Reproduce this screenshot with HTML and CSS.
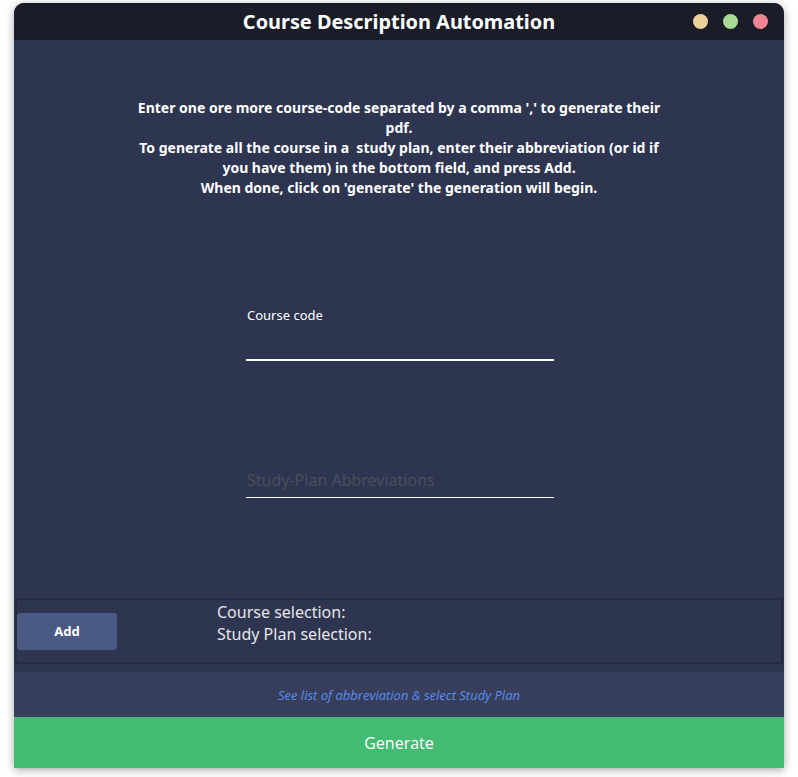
FILE: index.html
```html
<!DOCTYPE html>
<html>
<head>
<meta charset="utf-8">
<link rel="stylesheet" href="styles.css">
</head>
<body>
<div class="window">
  <div class="titlebar">
    <div class="title">Course Description Automation</div>
    <div class="dots">
      <span class="dot yellow"></span>
      <span class="dot green"></span>
      <span class="dot red"></span>
    </div>
  </div>
  <div class="main">
    <p class="intro">Enter one ore more course-code separated by a comma ',' to generate their pdf.<br>To generate all the course in a&nbsp; study plan, enter their abbreviation (or id if you have them) in the bottom field, and press Add.<br>When done, click on 'generate' the generation will begin.</p>
    <div class="field field-code">
      <label class="field-label">Course code</label>
      <div class="field-input"></div>
    </div>
    <div class="field field-plan">
      <div class="placeholder">Study-Plan Abbreviations</div>
    </div>
  </div>
  <div class="panel">
    <button class="add-btn">Add</button>
    <div class="selections">
      <div>Course selection:</div>
      <div>Study Plan selection:</div>
    </div>
  </div>
  <div class="linkbar"><span class="link">See list of abbreviation &amp; select Study Plan</span></div>
  <div class="generate">Generate</div>
</div>
</body>
</html>
```

FILE: styles.css
```css
* { box-sizing: border-box; }
html, body { margin: 0; padding: 0; }
body {
  background: #ffffff;
  width: 798px;
  height: 777px;
  overflow: hidden;
  font-family: "Noto Sans", "Open Sans", sans-serif;
}
.window {
  margin: 3px 0 0 14px;
  width: 770px;
  height: 765px;
  background: #2e3550;
  border-radius: 10px 10px 0 0;
  display: flex;
  flex-direction: column;
  box-shadow: 0 2px 10px rgba(0,0,0,0.35);
}
.titlebar {
  height: 37px;
  background: #1a1c28;
  border-radius: 10px 10px 0 0;
  display: flex;
  align-items: center;
  justify-content: center;
  position: relative;
}
.title {
  color: #ffffff;
  font-weight: 700;
  font-size: 19.9px;
}
.dots {
  position: absolute;
  right: 16px;
  top: 11px;
  display: flex;
  gap: 15px;
}
.dot {
  width: 15px;
  height: 15px;
  border-radius: 50%;
  display: block;
}
.yellow { background: #edd29c; }
.green { background: #a6da95; }
.red { background: #ee8592; }
.main {
  flex: 1;
  display: flex;
  flex-direction: column;
  align-items: center;
  padding-top: 58px;
}
.intro {
  margin: 0;
  width: 532px;
  text-align: center;
  color: #ffffff;
  font-weight: 700;
  font-size: 14px;
  line-height: 20px;
}
.field {
  width: 308px;
  margin-left: 2px;
}
.field-code {
  margin-top: 108px;
}
.field-label {
  display: block;
  color: #ffffff;
  font-size: 13px;
  line-height: 18px;
  padding-left: 1px;
}
.field-input {
  height: 37px;
  border-bottom: 2px solid #ffffff;
}
.field-plan {
  margin-top: 108px;
  border-bottom: 1.5px solid #ffffff;
}
.placeholder {
  color: #4a4e5c;
  font-size: 16px;
  line-height: 22px;
  padding: 0 0 6px 1px;
}
.panel {
  margin: 0 1px;
  height: 66px;
  border: 2px solid #262b42;
  display: flex;
  align-items: center;
}
.add-btn {
  width: 100px;
  height: 37px;
  border: none;
  border-radius: 3px;
  background: #4b5a84;
  color: #ffffff;
  font-family: "Noto Sans", "Open Sans", sans-serif;
  font-weight: 700;
  font-size: 13px;
}
.selections {
  margin-left: 100px;
  color: #e6e6ea;
  font-size: 16px;
  line-height: 22px;
  margin-top: -16px;
}
.linkbar {
  margin-top: 8px;
  height: 45px;
  background: #373f5d;
  border-radius: 3px 3px 0 0;
  display: flex;
  align-items: center;
  justify-content: center;
  padding-top: 1px;
}
.link {
  color: #5b8def;
  font-style: italic;
  font-size: 13px;
  font-family: "Open Sans", "Noto Sans", sans-serif;
}
.generate {
  height: 51px;
  background: #43bb72;
  color: #ffffff;
  font-size: 16px;
  font-family: "Open Sans", "Noto Sans", sans-serif;
  display: flex;
  align-items: center;
  justify-content: center;
}
```
